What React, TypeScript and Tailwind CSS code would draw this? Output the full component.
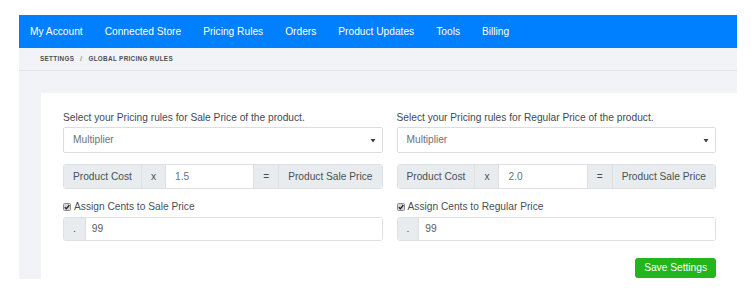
const NAV = ["My Account", "Connected Store", "Pricing Rules", "Orders", "Product Updates", "Tools", "Billing"];

function Addon({ children, last }: { children: React.ReactNode; last?: boolean }) {
  return (
    <div className={"flex items-center bg-[#e9ecef] px-[9px] text-[#495057] " + (last ? "" : "border-r border-[#dde1e6]")}>
      {children}
    </div>
  );
}

function Column({ label, value, cents }: { label: string; value: string; cents: string }) {
  return (
    <div className="flex flex-col">
      <div className="h-[14px] leading-[14px] text-[#444a52]">{label}</div>
      <div className="mt-[2px] flex h-[26px] items-center justify-between rounded-[2px] border border-[#dadee4] pl-[9px] pr-[6px] text-[#6c737a]">
        <span>Multiplier</span>
        <svg width="6" height="5" viewBox="0 0 6 5"><path d="M0.5 1 L5.5 1 L3 4.5 Z" fill="#3d4148" /></svg>
      </div>
      <div className="mt-[11px] flex h-[25px] overflow-hidden rounded-[3px] border border-[#dde1e6]">
        <Addon>Product Cost</Addon>
        <Addon>x</Addon>
        <div className="flex flex-1 items-center border-r border-[#dde1e6] bg-white pl-[9px] text-[#6c737a]">{value}</div>
        <Addon>=</Addon>
        <Addon last>Product Sale Price</Addon>
      </div>
      <div className="mt-[11px] flex h-[14px] items-center gap-[3px] text-[#4a5058]">
        <span className="flex h-[8px] w-[8px] items-center justify-center rounded-[1.5px] border border-[#8c8c8c] bg-[#d6d6d6]">
          <svg width="6" height="6" viewBox="0 0 6 6"><path d="M0.8 3.2 L2.4 4.8 L5.3 1" stroke="#222" strokeWidth="1.3" fill="none" /></svg>
        </span>
        <span>{cents}</span>
      </div>
      <div className="mt-[3px] flex h-[24px] overflow-hidden rounded-[3px] border border-[#dde1e6]">
        <Addon>.</Addon>
        <div className="flex flex-1 items-center bg-white pl-[6px] text-[#555b62]">99</div>
      </div>
    </div>
  );
}

export default function App() {
  return (
    <div className="min-h-[297px] bg-white pt-[15px] font-['Liberation_Sans',Arial,sans-serif] text-[10.2px]">
      <div className="ml-[19px] w-[718px]">
        <nav className="flex h-[33px] items-center gap-[22px] bg-[#0080ff] pl-[11px] text-white">
          {NAV.map((n) => (
            <span key={n}>{n}</span>
          ))}
        </nav>
        <div className="flex h-[23px] items-center border-b border-[#e3e5ea] bg-[#f2f3f7] pl-[21px] text-[6.3px] font-semibold tracking-[0.35px] text-[#4a4e55]">
          <span>SETTINGS</span>
          <span className="mx-[6px] font-normal">/</span>
          <span>GLOBAL PRICING RULES</span>
        </div>
        <div className="bg-[#f2f3f7] pl-[22px] pt-[22px]">
          <div className="bg-white pb-[1px] pl-[22px] pr-[21px] pt-[18px]">
            <div className="grid grid-cols-2 gap-x-[14px]">
              <Column label="Select your Pricing rules for Sale Price of the product." value="1.5" cents="Assign Cents to Sale Price" />
              <Column label="Select your Pricing rules for Regular Price of the product." value="2.0" cents="Assign Cents to Regular Price" />
            </div>
            <div className="mt-[17px] flex justify-end">
              <button className="h-[20px] rounded-[3px] bg-[#22b51c] px-[9px] text-white">Save Settings</button>
            </div>
          </div>
        </div>
      </div>
    </div>
  );
}
